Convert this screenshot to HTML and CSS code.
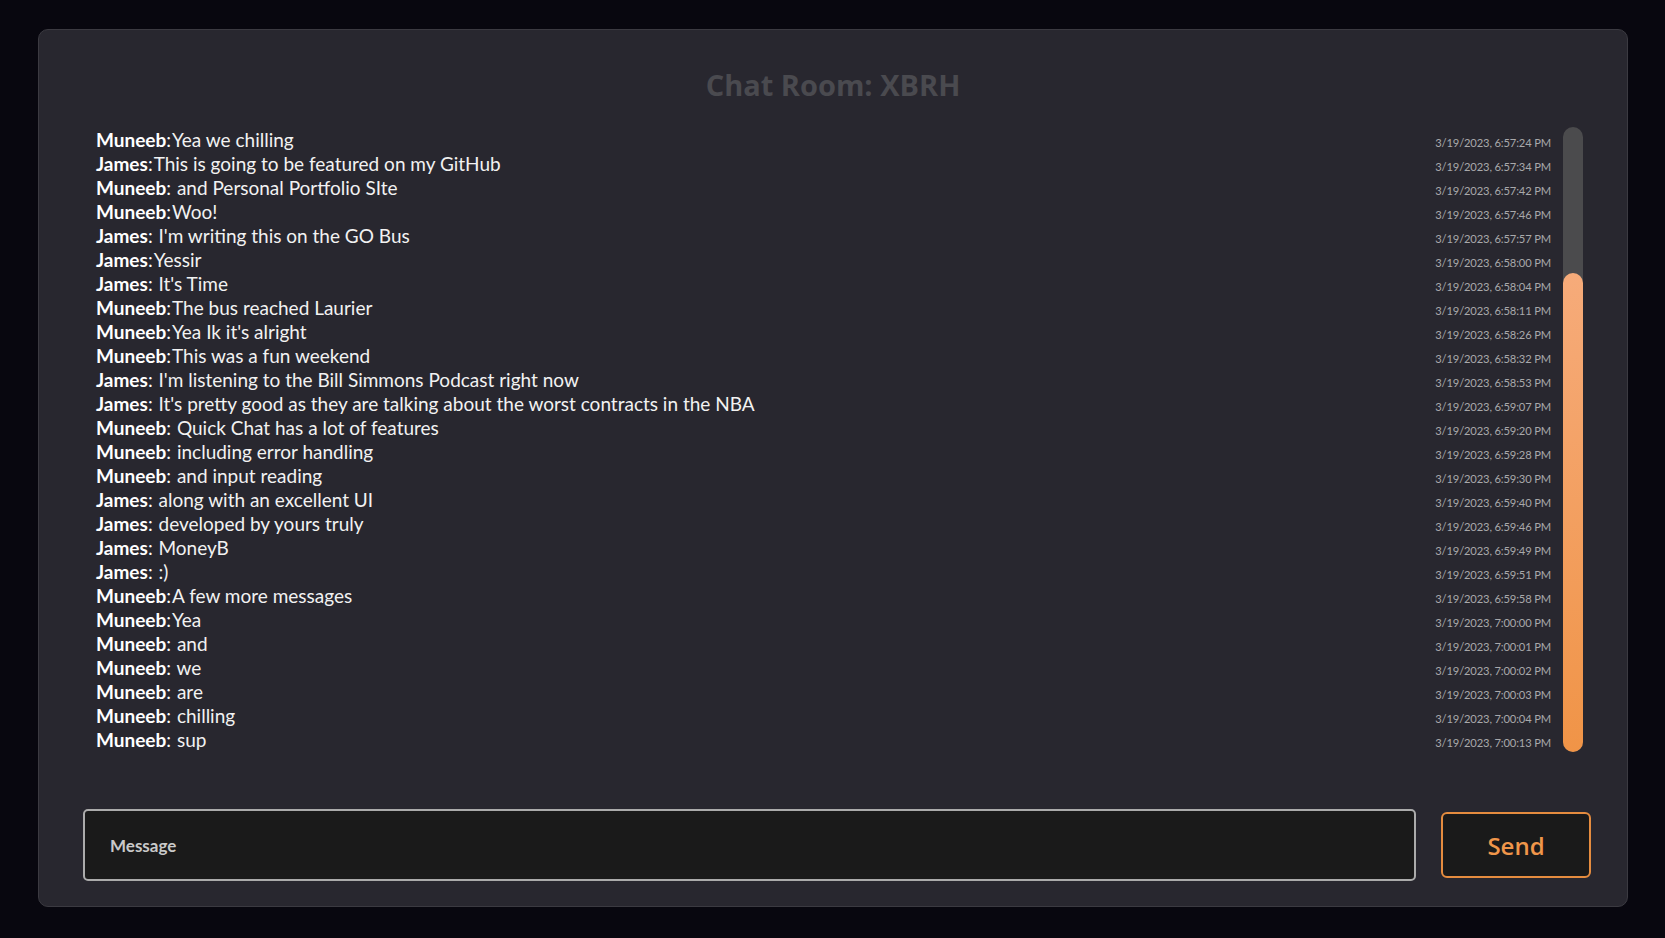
FILE: index.html
```html
<!DOCTYPE html>
<html lang="en">
<head>
<meta charset="utf-8">
<title>Chat Room: XBRH</title>
<link rel="stylesheet" href="styles.css">
</head>
<body>
<main class="card">
  <h1 class="title">Chat Room: XBRH</h1>
  <div class="messages">
    <div class="list">
      <div class="row"><span class="msg"><b>Muneeb</b><i>:</i>Yea we chilling</span><span class="time">3/19/2023, 6:57:24 PM</span></div>
      <div class="row"><span class="msg"><b>James</b><i>:</i>This is going to be featured on my GitHub</span><span class="time">3/19/2023, 6:57:34 PM</span></div>
      <div class="row"><span class="msg"><b>Muneeb</b><i>:</i> and Personal Portfolio SIte</span><span class="time">3/19/2023, 6:57:42 PM</span></div>
      <div class="row"><span class="msg"><b>Muneeb</b><i>:</i>Woo!</span><span class="time">3/19/2023, 6:57:46 PM</span></div>
      <div class="row"><span class="msg"><b>James</b><i>:</i> I'm writing this on the GO Bus</span><span class="time">3/19/2023, 6:57:57 PM</span></div>
      <div class="row"><span class="msg"><b>James</b><i>:</i>Yessir</span><span class="time">3/19/2023, 6:58:00 PM</span></div>
      <div class="row"><span class="msg"><b>James</b><i>:</i> It's Time</span><span class="time">3/19/2023, 6:58:04 PM</span></div>
      <div class="row"><span class="msg"><b>Muneeb</b><i>:</i>The bus reached Laurier</span><span class="time">3/19/2023, 6:58:11 PM</span></div>
      <div class="row"><span class="msg"><b>Muneeb</b><i>:</i>Yea Ik it's alright</span><span class="time">3/19/2023, 6:58:26 PM</span></div>
      <div class="row"><span class="msg"><b>Muneeb</b><i>:</i>This was a fun weekend</span><span class="time">3/19/2023, 6:58:32 PM</span></div>
      <div class="row"><span class="msg"><b>James</b><i>:</i> I'm listening to the Bill Simmons Podcast right now</span><span class="time">3/19/2023, 6:58:53 PM</span></div>
      <div class="row"><span class="msg"><b>James</b><i>:</i> It's pretty good as they are talking about the worst contracts in the NBA</span><span class="time">3/19/2023, 6:59:07 PM</span></div>
      <div class="row"><span class="msg"><b>Muneeb</b><i>:</i> Quick Chat has a lot of features</span><span class="time">3/19/2023, 6:59:20 PM</span></div>
      <div class="row"><span class="msg"><b>Muneeb</b><i>:</i> including error handling</span><span class="time">3/19/2023, 6:59:28 PM</span></div>
      <div class="row"><span class="msg"><b>Muneeb</b><i>:</i> and input reading</span><span class="time">3/19/2023, 6:59:30 PM</span></div>
      <div class="row"><span class="msg"><b>James</b><i>:</i> along with an excellent UI</span><span class="time">3/19/2023, 6:59:40 PM</span></div>
      <div class="row"><span class="msg"><b>James</b><i>:</i> developed by yours truly</span><span class="time">3/19/2023, 6:59:46 PM</span></div>
      <div class="row"><span class="msg"><b>James</b><i>:</i> MoneyB</span><span class="time">3/19/2023, 6:59:49 PM</span></div>
      <div class="row"><span class="msg"><b>James</b><i>:</i> :)</span><span class="time">3/19/2023, 6:59:51 PM</span></div>
      <div class="row"><span class="msg"><b>Muneeb</b><i>:</i>A few more messages</span><span class="time">3/19/2023, 6:59:58 PM</span></div>
      <div class="row"><span class="msg"><b>Muneeb</b><i>:</i>Yea</span><span class="time">3/19/2023, 7:00:00 PM</span></div>
      <div class="row"><span class="msg"><b>Muneeb</b><i>:</i> and</span><span class="time">3/19/2023, 7:00:01 PM</span></div>
      <div class="row"><span class="msg"><b>Muneeb</b><i>:</i> we</span><span class="time">3/19/2023, 7:00:02 PM</span></div>
      <div class="row"><span class="msg"><b>Muneeb</b><i>:</i> are</span><span class="time">3/19/2023, 7:00:03 PM</span></div>
      <div class="row"><span class="msg"><b>Muneeb</b><i>:</i> chilling</span><span class="time">3/19/2023, 7:00:04 PM</span></div>
      <div class="row"><span class="msg"><b>Muneeb</b><i>:</i> sup</span><span class="time">3/19/2023, 7:00:13 PM</span></div>
    </div>
    <div class="scrollbar" aria-hidden="true">
      <div class="thumb"></div>
    </div>
  </div>
  <form class="composer">
    <input class="input" type="text" placeholder="Message">
    <button class="send" type="button">Send</button>
  </form>
</main>
</body>
</html>
```
FILE: styles.css
```css
* { box-sizing: border-box; }

html, body {
  margin: 0;
  height: 100%;
}

body {
  background: #08070f;
  padding: 29px 37px 31px 38px;
  font-family: Lato, "Open Sans", sans-serif;
}

.card {
  height: 878px;
  background: #28272f;
  border: 1px solid #3b3a41;
  border-radius: 10px;
  padding: 35px 36px 25px 44px;
  display: flex;
  flex-direction: column;
}

.title {
  margin: 0 0 0 -8px;
  font-family: "Open Sans", sans-serif;
  font-weight: 700;
  font-size: 29px;
  line-height: 40px;
  text-align: center;
  color: #4a4a4f;
}

.messages {
  margin: 22px 8px 0 13px;
  height: 625px;
  display: flex;
  gap: 12px;
}

.list {
  flex: 1;
  display: flex;
  flex-direction: column;
  justify-content: flex-end;
}

.scrollbar {
  width: 20px;
  background: #4b4b4d;
  border-radius: 10px;
  display: flex;
  flex-direction: column;
  justify-content: flex-end;
}

.thumb {
  height: 479px;
  background: linear-gradient(#f6ab7a, #f09447);
  border-radius: 10px;
}

.row {
  display: flex;
  justify-content: space-between;
  align-items: baseline;
  height: 24px;
  line-height: 24px;
}

.msg {
  font-size: 19px;
  color: #f2f2f2;
  white-space: pre;
}

.msg b {
  color: #ffffff;
  font-weight: 700;
}

.msg i {
  font-style: normal;
  color: #ffffff;
  padding-right: 1px;
}

.time {
  font-size: 11.2px;
  letter-spacing: -0.15px;
  color: #a9a9ab;
}

.composer {
  margin: 57px 0 0 0;
  display: flex;
  align-items: center;
  gap: 25px;
}

.input {
  flex: 1;
  height: 72px;
  background: #1a1a1a;
  border: 2px solid #ababab;
  border-radius: 5px;
  padding: 0 0 0 25px;
  font-family: Lato, sans-serif;
  font-size: 17px;
  font-weight: 700;
  color: #eee;
  outline: none;
}

.input::placeholder {
  color: #c9c9c9;
}

.send {
  width: 150px;
  height: 66px;
  background: #1a1a1a;
  border: 2px solid #e58c3f;
  border-radius: 6px;
  font-family: "Open Sans", sans-serif;
  font-size: 24px;
  font-weight: 600;
  color: #f0964a;
  cursor: pointer;
}
```
